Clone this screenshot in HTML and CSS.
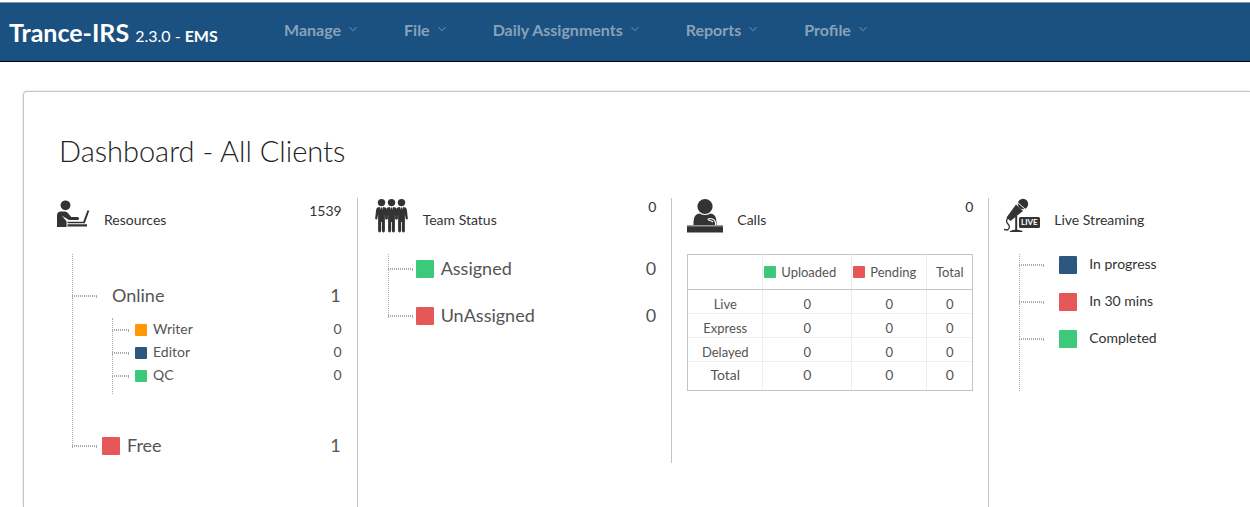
FILE: index.html
```html
<!DOCTYPE html>
<html lang="en">
<head>
<meta charset="utf-8">
<title>Trance-IRS Dashboard</title>
<link rel="stylesheet" href="styles.css">
</head>
<body>
<header class="topbar">
  <a class="brand" href="#"><span class="brand-name">Trance-IRS</span> <span class="brand-version">2.3.0 - <b>EMS</b></span></a>
  <nav class="menu">
    <button class="menu-item" type="button">Manage <svg class="chevron" viewBox="0 0 8 6"><path d="M0.5 1 4 4.8 7.5 1"/></svg></button>
    <button class="menu-item" type="button">File <svg class="chevron" viewBox="0 0 8 6"><path d="M0.5 1 4 4.8 7.5 1"/></svg></button>
    <button class="menu-item" type="button">Daily Assignments <svg class="chevron" viewBox="0 0 8 6"><path d="M0.5 1 4 4.8 7.5 1"/></svg></button>
    <button class="menu-item" type="button">Reports <svg class="chevron" viewBox="0 0 8 6"><path d="M0.5 1 4 4.8 7.5 1"/></svg></button>
    <button class="menu-item" type="button">Profile <svg class="chevron" viewBox="0 0 8 6"><path d="M0.5 1 4 4.8 7.5 1"/></svg></button>
  </nav>
</header>

<main class="panel">
  <h1 class="title">Dashboard - All Clients</h1>
  <div class="columns">

    <section class="column">
      <div class="column-head">
        <svg class="icon icon-narrow" viewBox="2 0 33 36">
          <circle cx="10.500" cy="7.300" r="4.900"/>
          <path d="M2 29V17.500q0-4 4-4h3.500q2.500 0 4 2.200l2.700 3.300h6.300q1.600 0 1.600 1.500t-1.600 1.500H14L7 17.800l4.500 5.400V29z"/>
          <path d="M12.500 23.700h15.700L32.500 12.200l1.800.6L29.800 25.200H12.500zM12.500 26.300H32V28.500H12.500z"/>
        </svg>
        <h2 class="column-label">Resources</h2>
        <span class="column-total column-total-main">1539</span>
      </div>
      <ul class="tree tree-resources">
        <li class="node node-plain"><span class="node-label">Online</span><span class="node-value node-value-inset">1</span></li>
        <li>
          <ul class="tree subtree">
            <li class="node"><span class="swatch orange"></span><span class="node-label">Writer</span><span class="node-value">0</span></li>
            <li class="node"><span class="swatch navy"></span><span class="node-label">Editor</span><span class="node-value">0</span></li>
            <li class="node"><span class="swatch green"></span><span class="node-label">QC</span><span class="node-value">0</span></li>
          </ul>
        </li>
        <li class="node"><span class="swatch red"></span><span class="node-label">Free</span><span class="node-value node-value-inset">1</span></li>
      </ul>
    </section>

    <section class="column column-short">
      <div class="column-head">
        <svg class="icon" viewBox="0 0 36 36">
          <g id="person">
            <circle cx="8.500" cy="4.600" r="3.700"/>
            <path d="M4.500 9.500 7 9 8.500 14 10 9l2.500.5q1.200.5 1.400 2.500l1 9-2 .5-1-5v16q0 2-1.500 2t-1.500-2V24h-.8v8.500q0 2-1.500 2t-1.500-2v-16l-1 5-2-.5 1-9q.2-2 1.400-2.500z"/>
            <path d="M8 9.500h1l.6 3.500-1.100 1.500L7.400 13z"/>
          </g>
          <use href="#person" x="10"/>
          <use href="#person" x="20"/>
        </svg>
        <h2 class="column-label">Team Status</h2>
        <span class="column-total">0</span>
      </div>
      <ul class="tree tree-team">
        <li class="node"><span class="swatch green"></span><span class="node-label">Assigned</span><span class="node-value">0</span></li>
        <li class="node"><span class="swatch red"></span><span class="node-label">UnAssigned</span><span class="node-value">0</span></li>
      </ul>
    </section>

    <section class="column">
      <div class="column-head">
        <svg class="icon" viewBox="0 0 36 36">
          <circle cx="18" cy="8.500" r="7.600"/>
          <path d="M6.500 27v-3q0-8 6-8.500 5.500 3 11 0 6 .5 6 8.500v3z"/>
          <path class="cutout" d="M28.500 27.500q.7-5-3-6.500-2.500-1-4.500.3 1 1.700 3.500 1.700l1.500 1"/>
          <path class="shade" d="M0 27h36v8H0z"/>
          <path d="M0 28.500h36v5.500H0z"/>
        </svg>
        <h2 class="column-label">Calls</h2>
        <span class="column-total">0</span>
      </div>
      <table class="calls">
        <colgroup><col class="col-kind"><col class="col-uploaded"><col class="col-pending"><col class="col-total"></colgroup>
        <thead>
          <tr><th></th><th scope="col"><span class="legend"><span class="swatch green"></span>Uploaded</span></th><th scope="col"><span class="legend"><span class="swatch red"></span>Pending</span></th><th scope="col">Total</th></tr>
        </thead>
        <tbody>
          <tr><th scope="row">Live</th><td>0</td><td>0</td><td>0</td></tr>
          <tr><th scope="row">Express</th><td>0</td><td>0</td><td>0</td></tr>
          <tr><th scope="row">Delayed</th><td>0</td><td>0</td><td>0</td></tr>
        </tbody>
        <tfoot>
          <tr><th scope="row">Total</th><td>0</td><td>0</td><td>0</td></tr>
        </tfoot>
      </table>
    </section>

    <section class="column column-last">
      <div class="column-head">
        <svg class="icon" viewBox="0 0 36 36">
          <circle cx="19" cy="6" r="5.200"/>
          <path class="gap" d="M12.500 3.500 22 12"/>
          <path d="M12 6.500 19 13 6.500 23 2.500 19.500z"/>
          <path class="cord" d="M4 20Q1 23 4 26t-.5 6L0 31.500"/>
          <path d="M11.200 18h2v14h-2zM6 33q6-3 12.500 0v1H6z"/>
          <rect x="15" y="19" width="21" height="11" rx="1.500"/>
          <text class="live-text" x="17" y="27">LIVE</text>
        </svg>
        <h2 class="column-label">Live Streaming</h2>
      </div>
      <ul class="tree tree-live">
        <li class="node"><span class="swatch navy"></span><span class="node-label">In progress</span></li>
        <li class="node"><span class="swatch red"></span><span class="node-label">In 30 mins</span></li>
        <li class="node"><span class="swatch green"></span><span class="node-label">Completed</span></li>
      </ul>
    </section>

  </div>
</main>
</body>
</html>
```
FILE: styles.css
```css
*, *::before { box-sizing: border-box; }

body {
  margin: 0;
  min-height: 100vh;
  display: flex;
  flex-direction: column;
  background: #fff;
  color: #333;
  font-family: Lato, "Open Sans", sans-serif;
  font-size: 14px;
}

h1, h2 { margin: 0; font-weight: 400; }
ul { margin: 0; padding: 0; list-style: none; }

/* Top bar */
.topbar {
  display: flex;
  align-items: center;
  height: 60px;
  margin-top: 2px;
  padding-left: 9px;
  background: #1b5180;
  border-top: 1px solid #7f96a8;
  border-bottom: 1px solid #000;
}
.brand {
  display: flex;
  align-items: baseline;
  gap: 6px;
  flex: 0 0 275px;
  color: #fff;
  text-decoration: none;
  white-space: nowrap;
}
.brand-name { font-size: 25px; font-weight: 700; }
.brand-version { font-size: 16px; }
.menu { display: flex; gap: 47px; padding-bottom: 6px; }
.menu-item {
  display: flex;
  align-items: center;
  gap: 8px;
  padding: 0;
  border: 0;
  background: none;
  color: #87a2ba;
  font: 700 16px Lato, sans-serif;
  white-space: nowrap;
}
.chevron { width: 8px; height: 6px; fill: none; stroke: #6f94b4; }

/* Panel */
.panel {
  flex: 1;
  display: flex;
  flex-direction: column;
  margin: 29px 0 0 23px;
  padding: 39px 0 0 18px;
  border: 1px solid #c4c4c4;
  border-width: 1px 0 0 1px;
  border-top-left-radius: 4px;
  box-shadow: 0 0 2px #ccc;
}
.title {
  padding-left: 17px;
  color: #222;
  font-size: 29px;
  font-weight: 300;
  line-height: 40px;
}
.columns {
  flex: 1;
  display: grid;
  grid-template-columns: 316fr 315fr 316fr 261fr;
  margin-top: 27px;
}
.column { padding: 0 15px; border-right: 1px solid #c4c4c4; }
.column-short { align-self: start; height: 265px; }
.column-last { border-right: 0; }
.column-head { display: flex; height: 56px; }
.icon { flex: none; width: 36px; height: 36px; fill: #333; }
.icon-narrow { width: 33px; }
.column-label {
  margin-left: 14px;
  padding-top: 12px;
  font-size: 14px;
  line-height: 20px;
}
.column-total { margin-left: auto; line-height: 18px; }
.column-total-main { padding-top: 4px; }
.cutout { fill: none; stroke: #fff; stroke-width: 1.1; }
.shade { fill: #999; }
.gap { fill: none; stroke: #fff; stroke-width: 1; }
.cord { fill: none; stroke: #333; stroke-width: 1.3; }
.live-text { fill: #fff; font: 700 8px Lato, sans-serif; }

/* Trees */
.tree { position: relative; margin-left: 15px; color: #555; }
.tree::before {
  content: "";
  position: absolute;
  top: 0;
  bottom: 0;
  left: 0;
  border-left: 1px dotted #aaa;
}
.node { display: flex; align-items: center; }
.node::before {
  content: "";
  flex: none;
  width: 25px;
  height: 2px;
  border: 1px dotted #aaa;
}
.node-label, .node-value { padding-bottom: 3px; }
.node-value { margin-left: auto; }
.node-value-inset { padding-right: 1px; }
.swatch { flex: none; width: 18px; height: 18px; border-radius: 1px; }
.orange { background: #ff9800; }
.navy { background: #2b5780; }
.green { background: #3dc97b; }
.red { background: #e65757; }

.tree-resources { padding-top: 24px; font-size: 18px; }
.tree-resources::before { bottom: 17px; }
.tree-resources > .node { height: 36px; }
.tree-resources > .node .swatch { margin: 0 7px 0 5px; }
.node-plain .node-label { margin-left: 15px; }
.subtree { margin: 4px 0 34px 40px; padding-bottom: 7px; font-size: 14px; }
.subtree .node { height: 23px; }
.subtree .node::before { width: 17px; }
.subtree .swatch { width: 12px; height: 12px; margin: 0 6px; }

.tree-team { font-size: 18px; }
.tree-team::before { bottom: 14px; }
.tree-team .node { height: 30px; }
.tree-team .node + .node { margin-top: 17px; }
.tree-team .swatch { margin: 0 7px 0 3px; }

.tree-live { height: 137px; color: #333; }
.tree-live .node { height: 22px; margin-bottom: 15px; }
.tree-live .swatch { margin: 0 12px 0 15px; }

/* Calls table */
.calls {
  width: 100%;
  table-layout: fixed;
  border-collapse: collapse;
  outline: 1px solid #c4c4c4;
  outline-offset: -1px;
  color: #555;
  font-size: 13px;
  line-height: 16px;
  text-align: center;
}
.col-kind { width: 75px; }
.col-uploaded { width: 89px; }
.col-pending { width: 75px; }
.col-total { width: 46px; }
.calls th, .calls td {
  height: 24px;
  padding: 4px 0 0;
  border: 1px solid #eee;
  font-weight: 400;
}
.calls thead th { height: 35px; padding: 0; border-bottom-color: #c4c4c4; }
.calls tfoot th, .calls tfoot td { height: 29px; padding: 0 0 3px; font-size: 14px; }
.legend { display: flex; align-items: center; gap: 5px; padding-left: 1px; }
.legend .swatch { width: 12px; height: 12px; }
```
